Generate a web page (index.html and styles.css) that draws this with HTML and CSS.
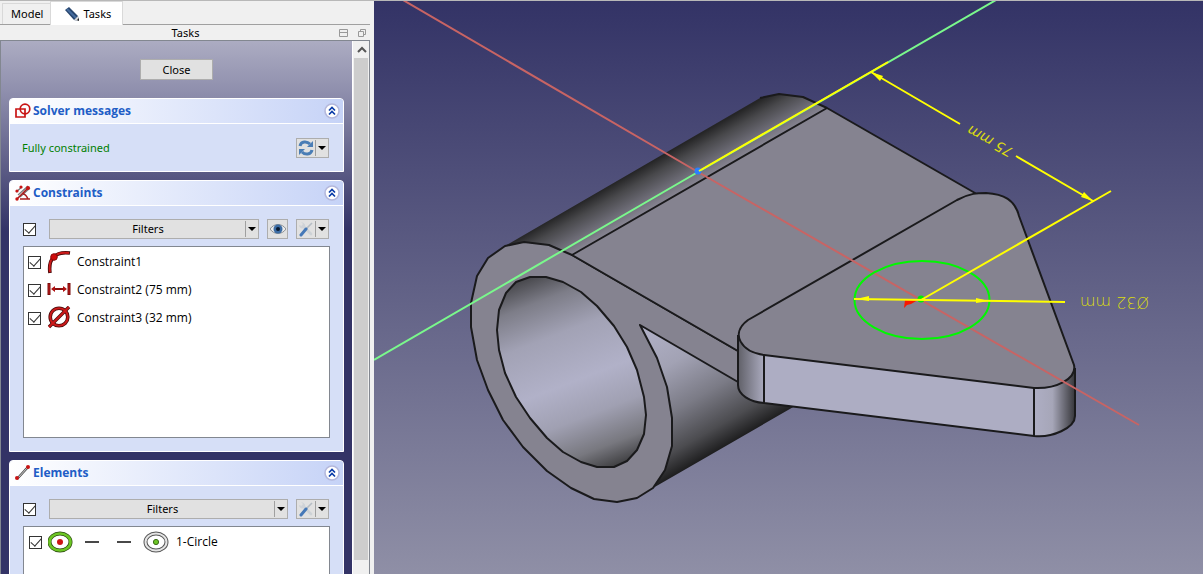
FILE: index.html
```html
<!DOCTYPE html>
<html lang="en">
    <head>
        <meta charset="utf-8">
        <title>Tasks</title>
        <link rel="stylesheet" href="styles.css">
    </head>
    <body>
        <!-- shared icons -->
        <svg class="defs" width="0" height="0">
            <symbol id="collapse" viewBox="0 0 16 16">
                <circle cx="8" cy="8" r="7" fill="#fff" stroke="#b4b8dc" stroke-width="1.6"/>
                <path d="M5 7.5l3-3 3 3M5 11.500l3-3 3 3" fill="none" stroke="#0a3ca8" stroke-width="1.7"/>
            </symbol>
            <symbol id="tools" viewBox="0 0 16 16">
                <path d="M5 5l8 8" stroke="#cdd2d6" stroke-width="2.600" stroke-linecap="round"/>
                <path d="M3 1l2 2-1 2-3-1c0 3 3 4 5 3s2-5-3-6z" fill="#cfd3d8"/>
                <path d="M14 2L8 8" stroke="#b4bcc4" stroke-width="1.600"/>
                <path d="M8 8l-5 6" stroke="#4679b8" stroke-width="3" stroke-linecap="round"/>
            </symbol>
        </svg>
        <div class="sidebar">
            <div class="tabs">
                <button class="tab">Model</button>
                <button class="tab active">
                    <svg width="16" height="16" viewBox="0 0 16 16">
                        <path d="M1 4l4-3 9 9 1 5-5-1z" fill="#28466e"/>
                        <path d="M3 3l9 9" stroke="#456c9e" stroke-width="2"/>
                        <path d="M10 14l4-4 1 5z" fill="#d8d8d8"/>
                        <path d="M13 14l2-2 0 3z" fill="#222"/>
                    </svg>
                    Tasks
                </button>
            </div>
            <div class="dock-title">
                <span>Tasks</span>
                <svg width="30" height="10" viewBox="0 0 30 10" fill="none" stroke="#999">
                    <path d="M.5 1.500h8v7h-8zM.5 4.500h8"/>
                    <path d="M19.500 3.500h5v5h-5zM21.500 3.500v-2h5v5h-2"/>
                </svg>
            </div>
            <div class="frame">
                <div class="tasks">
                    <button class="close">Close</button>

                    <section class="group solver">
                        <header>
                            <svg width="16" height="16" viewBox="0 0 16 16" fill="none" stroke="#c81414" stroke-width="1.700">
                                <path d="M1 6h9v8H1z"/>
                                <circle cx="10" cy="6" r="4.800"/>
                            </svg>
                            <h2>Solver messages</h2>
                            <svg class="collapse" width="16" height="16"><use href="#collapse"/></svg>
                        </header>
                        <div class="body row">
                            <span class="status">Fully constrained</span>
                            <button class="split" aria-label="Update">
                                <svg width="16" height="16" viewBox="0 0 16 16">
                                    <path d="M2 6c1-5 7-5 10-2" fill="none" stroke="#4a7db5" stroke-width="3"/>
                                    <path d="M15 1v6H9z" fill="#4a7db5"/>
                                    <path d="M14 10c-1 5-7 5-10 2" fill="none" stroke="#4a7db5" stroke-width="3"/>
                                    <path d="M1 15V9h6z" fill="#4a7db5"/>
                                </svg>
                                <i class="arrow"></i>
                            </button>
                        </div>
                    </section>

                    <section class="group constraints">
                        <header>
                            <svg width="16" height="16" viewBox="0 0 16 16">
                                <path d="M1 7l6-5M3 10l10-9M5 12l10-9" stroke="#777" stroke-width="1.2"/>
                                <path d="M2 14L13 3M5 14h10M8 9c3 0 4 3 5 5" fill="none" stroke="#a81c1c" stroke-width="1.6"/>
                                <circle cx="2" cy="6" r="1.600" fill="#c81414"/>
                                <circle cx="6" cy="2" r="1.600" fill="#c81414"/>
                                <circle cx="13" cy="3" r="2" fill="#c81414"/>
                                <circle cx="2" cy="14" r="1.700" fill="#c81414"/>
                            </svg>
                            <h2>Constraints</h2>
                            <svg class="collapse" width="16" height="16"><use href="#collapse"/></svg>
                        </header>
                        <div class="body">
                            <div class="row">
                                <input type="checkbox" checked aria-label="All constraints">
                                <button class="split filters"><span>Filters</span><i class="arrow"></i></button>
                                <button class="eye" aria-label="Show">
                                    <svg width="16" height="16" viewBox="0 0 16 16">
                                        <path d="M0 8c4-6 12-6 16 0-4 6-12 6-16 0z" fill="#ececec" stroke="#8a8f94"/>
                                        <circle cx="8" cy="8" r="4.500" fill="#3d6da4"/>
                                        <circle cx="8" cy="8" r="2" fill="#0b1a30"/>
                                    </svg>
                                </button>
                                <button class="split" aria-label="Settings"><svg width="16" height="16"><use href="#tools"/></svg><i class="arrow"></i></button>
                            </div>
                            <ul class="list">
                                <li><label>
                                    <input type="checkbox" checked>
                                    <svg width="24" height="24" viewBox="0 0 24 24" fill="none">
                                        <path d="M3 23C1 9 8 1 23 3" stroke="#4a0a0a" stroke-width="3.600"/>
                                        <path d="M3 22C1 9 8 1 22 3" stroke="#cc1a1a" stroke-width="2"/>
                                        <circle cx="7" cy="7" r="3.300" fill="#d00c0c" stroke="#8a0a0a"/>
                                    </svg>
                                    Constraint1
                                </label></li>
                                <li><label>
                                    <input type="checkbox" checked>
                                    <svg width="24" height="24" viewBox="0 0 24 24">
                                        <path d="M2 5v12M22 5v12" stroke="#7a0c0c" stroke-width="3"/>
                                        <path d="M2 6v10M22 6v10" stroke="#c41a1a" stroke-width="1"/>
                                        <path d="M6 11h12" stroke="#8a0e0e" stroke-width="2"/>
                                        <path d="M4 11l4-3v6zM20 11l-4-3v6z" fill="#b01010"/>
                                    </svg>
                                    Constraint2 (75 mm)
                                </label></li>
                                <li><label>
                                    <input type="checkbox" checked>
                                    <svg width="24" height="24" viewBox="0 0 24 24" fill="none">
                                        <circle cx="12" cy="11" r="8.800" stroke="#4a0a0a" stroke-width="3.600"/>
                                        <path d="M2 21L22 1" stroke="#4a0a0a" stroke-width="3.400"/>
                                        <circle cx="12" cy="11" r="8.800" stroke="#cc1a1a" stroke-width="2"/>
                                        <path d="M2 21L22 1" stroke="#cc1a1a" stroke-width="2"/>
                                    </svg>
                                    Constraint3 (32 mm)
                                </label></li>
                            </ul>
                        </div>
                    </section>

                    <section class="group elements">
                        <header>
                            <svg width="16" height="16" viewBox="0 0 16 16">
                                <path d="M2 14L13 2" stroke="#444" stroke-width="2.400"/>
                                <path d="M2 14L13 2" stroke="#ddd" stroke-width="1"/>
                                <circle cx="2" cy="13" r="2" fill="#c81414"/>
                                <circle cx="13" cy="2" r="2" fill="#c81414"/>
                            </svg>
                            <h2>Elements</h2>
                            <svg class="collapse" width="16" height="16"><use href="#collapse"/></svg>
                        </header>
                        <div class="body">
                            <div class="row">
                                <input type="checkbox" checked aria-label="All elements">
                                <button class="split filters"><span>Filters</span><i class="arrow"></i></button>
                                <button class="split" aria-label="Settings"><svg width="16" height="16"><use href="#tools"/></svg><i class="arrow"></i></button>
                            </div>
                            <ul class="list">
                                <li><label>
                                    <input type="checkbox" checked>
                                    <svg width="122" height="24" viewBox="0 0 122 24" fill="none">
                                        <ellipse cx="12" cy="12" rx="10.500" ry="8.500" stroke="#2c4a10" stroke-width="4"/>
                                        <ellipse cx="12" cy="12" rx="10.500" ry="8.500" stroke="#6cc624" stroke-width="2.600"/>
                                        <circle cx="12" cy="12" r="3" fill="#cc1414"/>
                                        <path d="M37 12h14M69 12h14" stroke="#484848" stroke-width="2"/>
                                        <ellipse cx="108" cy="12" rx="10.500" ry="8.500" stroke="#555" stroke-width="4"/>
                                        <ellipse cx="108" cy="12" rx="10.500" ry="8.500" stroke="#e4e4e4" stroke-width="2"/>
                                        <circle cx="108" cy="12" r="2.600" fill="#6cc624" stroke="#3c6a18"/>
                                    </svg>
                                    1-Circle
                                </label></li>
                            </ul>
                        </div>
                    </section>
                </div>
                <div class="scrollbar">
                    <svg width="15" height="17" viewBox="0 0 15 17"><path d="M4 11l4-4 4 4" fill="none" stroke="#555" stroke-width="2"/></svg>
                    <div class="thumb"></div>
                </div>
            </div>
        </div>

        <div class="viewport">
            <svg width="100%" height="100%" viewBox="374 1 829 573" preserveAspectRatio="xMinYMin slice">
                <defs>
                    <linearGradient id="tubeTop" gradientUnits="userSpaceOnUse" x1="600" y1="191" x2="620" y2="226">
                        <stop offset="0" stop-color="#252526"/>
                        <stop offset=".3" stop-color="#48484b"/>
                        <stop offset=".7" stop-color="#6b6a74"/>
                        <stop offset="1" stop-color="#858390"/>
                    </linearGradient>
                    <linearGradient id="tubeBottom" gradientUnits="userSpaceOnUse" x1="724" y1="447" x2="654" y2="325">
                        <stop offset="0" stop-color="#1e1e1f"/>
                        <stop offset=".15" stop-color="#4c4c50"/>
                        <stop offset=".4" stop-color="#7b7b86"/>
                        <stop offset=".7" stop-color="#a2a2b4"/>
                        <stop offset="1" stop-color="#b0b0c6"/>
                    </linearGradient>
                    <linearGradient id="bore" gradientUnits="userSpaceOnUse" x1="516" y1="276" x2="594" y2="478">
                        <stop offset="0" stop-color="#3c3c3f"/>
                        <stop offset=".15" stop-color="#7d7d88"/>
                        <stop offset=".32" stop-color="#a2a2b5"/>
                        <stop offset=".55" stop-color="#b1b1c8"/>
                        <stop offset=".72" stop-color="#a0a0b2"/>
                        <stop offset=".88" stop-color="#78787f"/>
                        <stop offset="1" stop-color="#38383a"/>
                    </linearGradient>
                    <linearGradient id="cornerLeft">
                        <stop offset="0" stop-color="#606068"/>
                        <stop offset="1" stop-color="#aaaabe"/>
                    </linearGradient>
                    <linearGradient id="cornerRight">
                        <stop offset="0" stop-color="#aeaec4"/>
                        <stop offset=".45" stop-color="#a6a6b8"/>
                        <stop offset="1" stop-color="#36363a"/>
                    </linearGradient>
                </defs>

                <!-- tube -->
                <path fill="url(#tubeTop)" d="M505 246L760 98 779 94 803 97 827 108 572 255 549 245 524 242z"/>
                <path fill="url(#tubeBottom)" d="M640 325L738 382 795 406 653 488 660 440z"/>
                <g class="edge">
                    <path fill="#858390" d="M572 255L549 245 524 242 505 246 488 258 477 276 471 303 471 327 477 360 488 390 503 420 523 447 547 471 571 488 594 499 617 502 637 498 653 488 665 470 672 446 672 418 667 387 657 358 640 325 738 382 738 351z"/>
                    <path fill="url(#bore)" d="M498 320L499 310 506 293 516 282 530 277 546 277 563 282 581 292 597 306 614 326 627 347 637 370 644 397 646 415 644 434 637 450 627 461 614 467 597 467 581 462 563 452 547 438 530 418 516 397 505 373 499 350 497 330z"/>
                    <path fill="#858390" d="M572 255L827 108 975 193 990 300 760 360 738 351z"/>
                    <path fill="none" d="M760 98L779 94 803 97 827 108"/>
                </g>

                <!-- plate -->
                <path fill="#adadc3" d="M763 355L1034 388 1034 436 763 403z"/>
                <path fill="url(#cornerLeft)" d="M738 335Q740 350 764 355V403Q742 400 738 385z"/>
                <path fill="url(#cornerRight)" d="M1034 388Q1067 388 1075 367V417C1073 432 1050 438 1034 436z"/>
                <g class="edge">
                    <path fill="#858390" d="M748 320L957 200C970 193 978 193 986 193 1004 194 1015 200 1019 216L1074 365C1077 379 1056 389 1034 388L764 355C742 352 729 334 748 320z"/>
                    <path fill="none" d="M738 335V385C738 395 750 402 764 403L1034 436C1052 438 1075 428 1075 416V368M764 355V403M1034 388V436"/>
                </g>

                <!-- sketch axes -->
                <path class="axis red" d="M403 0L698 172 1139 425"/>
                <path class="axis green" d="M374 360L698 172 996 0"/>
                <circle cx="698" cy="171" r="3.500" fill="#2a80ff"/>

                <!-- circle and dimensions -->
                <ellipse cx="922" cy="300" rx="67.500" ry="39" fill="none" stroke="#00f800" stroke-width="2"/>
                <path fill="#f81800" d="M904 308l1-8 13 0-7 4-4 1z"/>
                <circle cx="921" cy="299" r="3.500" fill="#00f000"/>
                <path class="dim" d="M699 171L888 62M871 72L960 124M1016 156L1093 201M921 300L1111 191M854 299L1065 302"/>
                <path fill="#ff0" d="M871 72l12 4-3 5zM1093 201l-12-4 3-5zM856 299l13-3v5zM989 301l-13-3v5z"/>
                <text transform="translate(1014 149) rotate(209)" font-size="14" font-style="italic">75 mm</text>
                <text transform="translate(1149 297) rotate(180)" font-size="16">Ø32 mm</text>
            </svg>
        </div>
    </body>
</html>
```
FILE: styles.css
```css
* {
    box-sizing: border-box;
}
body {
    display: flex;
    height: 100vh;
    margin: 0;
    overflow: hidden;
    border-top: 1px solid #b8b8b8;
    background-color: #f0f0f0;
    font-family: "Noto Sans", "Open Sans", sans-serif;
    font-size: 11px;
    line-height: 16px;
    color: #000;
}
button {
    padding: 0;
    border: 1px solid #adadad;
    background-color: #e1e1e1;
    font: inherit;
    color: inherit;
}
svg {
    display: block;
    flex: none;
}
.defs {
    position: absolute;
}
.sidebar {
    display: flex;
    flex-direction: column;
    flex: none;
    width: 370px;
    margin-right: 4px;
}

/* tabs */
.tabs {
    display: flex;
    align-items: flex-end;
    height: 24px;
    padding-left: 2px;
    border-bottom: 1px solid #a0a0a0;
}
.tab {
    height: 21px;
    padding: 0 7px 0 8px;
    border: 1px solid #d9d9d9;
    border-width: 1px 0 0 1px;
    background-color: #f0f0f0;
}
.tab.active {
    display: flex;
    align-items: center;
    gap: 3px;
    height: 24px;
    margin-bottom: -1px;
    padding: 0 11px 0 13px;
    border-width: 1px 1px 0 1px;
    background-color: #fff;
}
.dock-title {
    display: flex;
    align-items: center;
    height: 15px;
    padding-right: 1px;
}
.dock-title span {
    flex: 1;
    padding-left: 32px;
    text-align: center;
}

/* task panel */
.frame {
    display: flex;
    flex: 1;
    min-height: 0;
    border: 1px solid #828790;
    border-bottom: 0;
}
.tasks {
    display: flex;
    flex-direction: column;
    flex: 1;
    gap: 8px;
    padding: 18px 8px 0;
    overflow: hidden;
    background: linear-gradient(#acacc2, #8f8fad 50px, #333366 190px);
}
.close {
    flex: none;
    align-self: center;
    width: 73px;
    height: 21px;
    margin-bottom: 10px;
}
.group {
    flex: none;
    border: 1px solid #fff;
    border-radius: 4px 4px 0 0;
    background-color: #d6dff7;
}
.group header {
    display: flex;
    align-items: center;
    gap: 2px;
    height: 25px;
    padding: 0 3px 0 5px;
    border-bottom: 1px solid #fff;
    border-radius: 3px 3px 0 0;
    background: linear-gradient(to right, #fff, #c6d3f7);
}
.group h2 {
    flex: 1;
    margin: 0;
    font-family: "Open Sans", sans-serif;
    font-size: 12px;
    color: #215dc6;
}
.row {
    display: flex;
    align-items: center;
    gap: 8px;
}
.body {
    padding: 13px;
}
.solver .body {
    justify-content: space-between;
    height: 47px;
    padding: 0 14px 0 12px;
}
.status {
    color: #008000;
}
.body .row {
    padding-right: 1px;
}
.row > input {
    margin-right: 5px;
}
input {
    flex: none;
    display: grid;
    place-items: center;
    appearance: none;
    width: 13px;
    height: 13px;
    margin: 0;
    border: 1px solid #333;
    background-color: #fff;
}
input:checked::after {
    content: "";
    width: 9px;
    height: 5px;
    margin-bottom: 3px;
    border: solid #333;
    border-width: 0 0 1px 1px;
    transform: rotate(-48deg);
}
.split {
    display: flex;
    align-items: center;
    justify-content: space-between;
    width: 33px;
    height: 20px;
    padding-left: 1px;
}
.filters {
    flex: 1;
}
.filters span {
    flex: 1;
}
.eye {
    display: grid;
    place-items: center;
    width: 21px;
    height: 20px;
}
.arrow {
    display: grid;
    place-items: center;
    width: 13px;
    height: 16px;
    border-left: 1px solid #a0a0a0;
}
.arrow::after {
    content: "";
    border: 4px solid transparent;
    border-top-color: #000;
    border-bottom: 0;
}
.list {
    height: 192px;
    margin: 7px 0 0;
    padding: 1px 4px;
    border: 1px solid #828790;
    background-color: #fff;
    font-family: "Open Sans", sans-serif;
    font-size: 12px;
    list-style: none;
}
.list label {
    display: flex;
    align-items: center;
    gap: 6px;
    height: 28px;
}
.elements .list {
    padding-left: 5px;
}

.scrollbar {
    flex: none;
    width: 17px;
    padding: 0 1px;
    border-left: 1px solid #fff;
    background-color: #f0f0f0;
}
.thumb {
    height: calc(100% - 31px);
    background-color: #cdcdcd;
}

/* 3d view */
.viewport {
    flex: 1;
    min-width: 0;
    background: linear-gradient(#333366, #8f8fa6);
}
.edge {
    stroke: #1a1a1c;
    stroke-width: 2;
    stroke-linejoin: round;
}
.axis {
    fill: none;
    stroke-width: 2;
}
.axis.red {
    stroke: #c86464;
}
.axis.green {
    stroke: #7af88c;
}
.dim {
    fill: none;
    stroke: #ff0;
    stroke-width: 2;
}
.viewport text {
    font-family: "DejaVu Sans", sans-serif;
    font-weight: 200;
    fill: #dcdc10;
}
```
